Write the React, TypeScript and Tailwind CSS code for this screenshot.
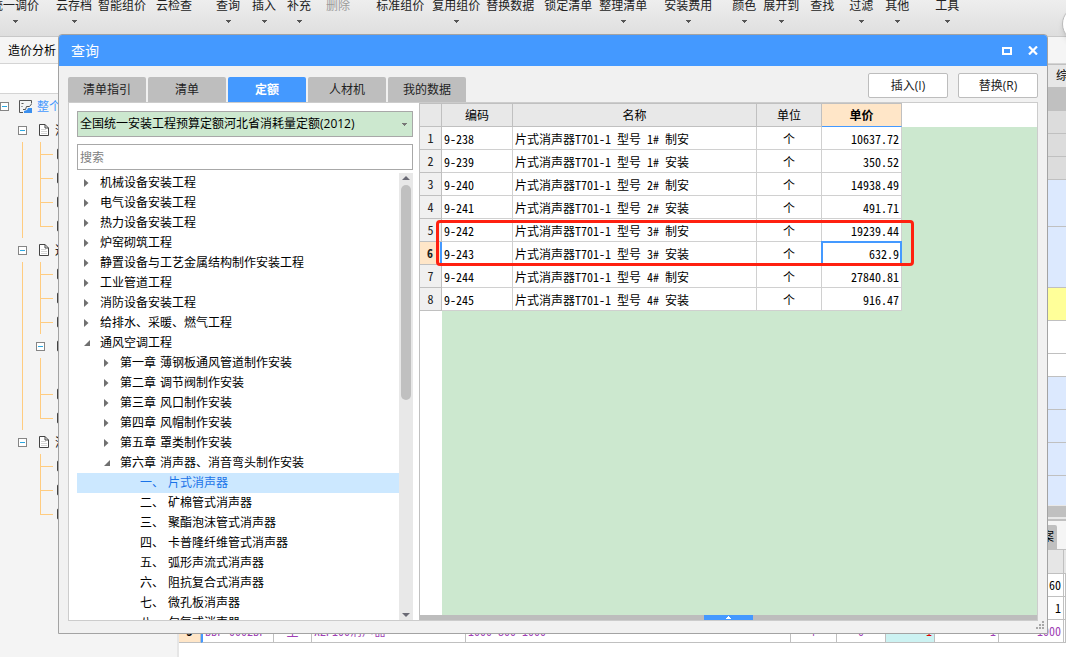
import clsx from "clsx";

const ribbonItems = [
  { label: "统一调价", space: "-ml-[9px]", menu: true },
  { label: "云存档", space: "ml-[17px]", menu: true },
  { label: "智能组价", space: "ml-1.5" },
  { label: "云检查", space: "ml-2.5" },
  { label: "查询", space: "ml-6", menu: true },
  { label: "插入", space: "ml-3", menu: true },
  { label: "补充", space: "ml-[11px]", menu: true },
  { label: "删除", space: "ml-[15px]", disabled: true },
  { label: "标准组价", space: "ml-[26px]" },
  { label: "复用组价", space: "ml-2", menu: true },
  { label: "替换数据", space: "ml-1.5" },
  { label: "锁定清单", space: "ml-2.5" },
  { label: "整理清单", space: "ml-[7px]", menu: true },
  { label: "安装费用", space: "ml-[17px]", menu: true },
  { label: "颜色", space: "ml-5", menu: true },
  { label: "展开到", space: "ml-[7px]", menu: true },
  { label: "查找", space: "ml-[11px]" },
  { label: "过滤", space: "ml-[15px]", menu: true },
  { label: "其他", space: "ml-3", menu: true },
  { label: "工具", space: "ml-[26px]", menu: true },
];

type ProjectRow = {
  kind: "doc" | "group" | "child" | "gap" | "last";
  line: boolean;
  label?: string;
};

const projectRows: ProjectRow[] = [
  { kind: "doc", line: false, label: "消防工程" },
  { kind: "child", line: true },
  { kind: "child", line: true },
  { kind: "child", line: true },
  { kind: "last", line: true },
  { kind: "doc", line: false, label: "通风工程" },
  { kind: "child", line: true },
  { kind: "child", line: true },
  { kind: "child", line: true },
  { kind: "group", line: true },
  { kind: "gap", line: true },
  { kind: "child", line: true },
  { kind: "last", line: true },
  { kind: "doc", line: false, label: "消防工程" },
  { kind: "child", line: false },
  { kind: "child", line: false },
  { kind: "last", line: false },
];

const tabs = ["清单指引", "清单", "定额", "人材机", "我的数据"];

const catalog = [
  { level: 0, text: ["机械设备安装工程"] },
  { level: 0, text: ["电气设备安装工程"] },
  { level: 0, text: ["热力设备安装工程"] },
  { level: 0, text: ["炉窑砌筑工程"] },
  { level: 0, text: ["静置设备与工艺金属结构制作安装工程"] },
  { level: 0, text: ["工业管道工程"] },
  { level: 0, text: ["消防设备安装工程"] },
  { level: 0, text: ["给排水、采暖、燃气工程"] },
  { level: 0, text: ["通风空调工程"], open: true },
  { level: 1, text: ["第一章", "薄钢板通风管道制作安装"] },
  { level: 1, text: ["第二章", "调节阀制作安装"] },
  { level: 1, text: ["第三章", "风口制作安装"] },
  { level: 1, text: ["第四章", "风帽制作安装"] },
  { level: 1, text: ["第五章", "罩类制作安装"] },
  { level: 1, text: ["第六章", "消声器、消音弯头制作安装"], open: true },
  { level: 2, text: ["一、", "片式消声器"], active: true },
  { level: 2, text: ["二、", "矿棉管式消声器"] },
  { level: 2, text: ["三、", "聚酯泡沫管式消声器"] },
  { level: 2, text: ["四、", "卡普隆纤维管式消声器"] },
  { level: 2, text: ["五、", "弧形声流式消声器"] },
  { level: 2, text: ["六、", "阻抗复合式消声器"] },
  { level: 2, text: ["七、", "微孔板消声器"] },
  { level: 2, text: ["八、", "匀复式消声器"] },
];

const quotas = [
  { code: "9-238", name: "片式消声器T701-1 型号 1# 制安", unit: "个", price: "10637.72" },
  { code: "9-239", name: "片式消声器T701-1 型号 1# 安装", unit: "个", price: "350.52" },
  { code: "9-240", name: "片式消声器T701-1 型号 2# 制安", unit: "个", price: "14938.49" },
  { code: "9-241", name: "片式消声器T701-1 型号 2# 安装", unit: "个", price: "491.71" },
  { code: "9-242", name: "片式消声器T701-1 型号 3# 制安", unit: "个", price: "19239.44" },
  { code: "9-243", name: "片式消声器T701-1 型号 3# 安装", unit: "个", price: "632.9" },
  { code: "9-244", name: "片式消声器T701-1 型号 4# 制安", unit: "个", price: "27840.81" },
  { code: "9-245", name: "片式消声器T701-1 型号 4# 安装", unit: "个", price: "916.47" },
];

const sheetRows = [
  "h-6 bg-[#c0c0c0]",
  "h-[23px] border-b border-[#c0c0c0] bg-[#dcdcdc]",
  "h-[23px] border-b border-[#c0c0c0] bg-[#dcdcdc]",
  "h-[23px] border-b border-[#c0c0c0] bg-[#dcdcdc]",
  "h-[47px] border-b border-[#c0c0c0] bg-[#dce9fe]",
  "h-[61px] border-b border-[#c0c0c0] bg-[#dce9fe]",
  "h-[33px] border-b border-[#c0c0c0] bg-[#ffff99]",
  "h-[33px] border-b border-[#c0c0c0] bg-white",
  "h-[23px] border-b border-[#c0c0c0] bg-white",
  "h-[33px] border-b border-[#c0c0c0] bg-[#dce9fe]",
  "h-[33px] border-b border-[#c0c0c0] bg-[#dce9fe]",
  "h-[33px] border-b border-[#c0c0c0] bg-[#dce9fe]",
  "h-[29px] bg-[#dce9fe]",
];

function Caret({ className }: { className?: string }) {
  return (
    <svg width="5" height="3" viewBox="0 0 5 3" className={className} aria-hidden="true">
      <path d="M0 0h5v1H4v1H3v1H2V2H1V1H0z" fill="currentColor" />
    </svg>
  );
}

function Ribbon() {
  return (
    <nav className="flex h-[37px] shrink-0 items-start overflow-hidden border-b border-[#c8c8c8] bg-linear-to-b from-[#eeeeee] to-[#dedede]">
      {ribbonItems.map((item) => (
        <button
          key={item.label}
          type="button"
          disabled={item.disabled}
          className={clsx(
            "-mt-1 flex shrink-0 flex-col items-center text-xs leading-5 whitespace-nowrap",
            item.space,
            item.disabled ? "text-[#9b9b9b]" : "text-[#222]",
          )}
        >
          {item.label}
          {item.menu && <Caret className="mt-1 text-[#555]" />}
        </button>
      ))}
    </nav>
  );
}

function Collapse() {
  return (
    <svg width="9" height="9" viewBox="0 0 9 9" className="shrink-0" aria-hidden="true">
      <rect x="0.5" y="0.5" width="8" height="8" fill="#fff" stroke="#858585" />
      <path d="M2 4.5h5" stroke="#2ba7e0" />
    </svg>
  );
}

function ProjectTree() {
  return (
    <aside className="flex w-[179px] shrink-0 flex-col overflow-hidden border-r-2 border-[#e6e6e6] bg-[#f4f4f4]">
      <div className="h-[30px] shrink-0 border-b border-[#d4d4d4] bg-white" />
      <ul className="text-xs whitespace-nowrap">
        <li className="flex h-6 items-center">
          <Collapse />
          <svg width="13" height="13" viewBox="0 0 13 13" className="ml-2.5" aria-hidden="true">
            <path d="M12.5 3.500V.5H.5v12H4" fill="none" stroke="#555" />
            <path d="M2.500 3.500h2M2.500 6.500h1" stroke="#555" />
            <path d="M4 9.500h2.500l1-3h3l2-2.500" stroke="#555" fill="none" />
            <path d="M5 13v-2l3-1 1-2h4v5z" fill="#3b8fee" />
          </svg>
          <span className="ml-[5px] pt-0.5 text-[#4499ff]">整个项目</span>
        </li>
        {projectRows.map((row, i) => (
          <li key={i} className="flex h-6 items-center">
            {row.kind === "doc" ? (
              <>
                <span className="w-[18px]" />
                <Collapse />
                <svg width="10" height="12" viewBox="0 0 10 12" className="ml-3 shrink-0" aria-hidden="true">
                  <path d="M.5.5h5.500L9.500 4v7.500h-9z" fill="#fff" stroke="#444" />
                  <path d="M6 .5V4h3.500" fill="none" stroke="#444" />
                  <path d="M2 5.500h5M2 7.500h6M2 9.500h6" stroke="#d4d4d4" />
                </svg>
                <span className="ml-1.5 pt-0.5">{row.label}</span>
              </>
            ) : (
              <>
                <span
                  className={clsx(
                    "ml-[22px] h-6 w-3.5 shrink-0",
                    row.line && "border-l border-[#ffcc80]",
                  )}
                />
                {row.kind === "group" ? (
                  <span className="w-[21px]">
                    <Collapse />
                  </span>
                ) : (
                  <span className="ml-1 flex h-6 w-[17px] flex-col">
                    <span
                      className={clsx(
                        "h-[13px] w-[13px] border-l border-[#ffcc80]",
                        row.kind !== "gap" && "border-b",
                      )}
                    />
                    {row.kind !== "last" && (
                      <span className="w-[13px] flex-1 border-l border-[#ffcc80]" />
                    )}
                  </span>
                )}
                {row.kind !== "gap" && (
                  <span className="h-3 w-2.5 rounded-xs border border-[#444] bg-white" />
                )}
              </>
            )}
          </li>
        ))}
      </ul>
    </aside>
  );
}

function Sheet() {
  return (
    <div className="flex min-w-0 flex-1 flex-col bg-white text-xs">
      <table className="w-full table-fixed border-separate border-spacing-0">
        <thead>
          <tr>
            <th className="h-[23px] border-t border-[#c0c0c0] bg-[#e6e6e6] p-0" />
            <th className="w-2.5 overflow-hidden border-t border-[#c0c0c0] bg-[#e6e6e6] p-0 text-left font-normal whitespace-nowrap">
              综合
            </th>
          </tr>
        </thead>
        <tbody>
          {sheetRows.map((row, i) => (
            <tr key={i}>
              <td colSpan={2} className={clsx("p-0", row)} />
            </tr>
          ))}
        </tbody>
      </table>
      <div className="h-3.5 shrink-0 border-y-2 border-t-1 border-[#e8e8e8] bg-[#c0c0c0]" />
      <div className="flex h-[31px] shrink-0 items-end justify-end border-t-2 border-b border-[#c0c0c0] bg-[#f5f5f5] pr-[9px]">
        <button type="button" className="h-6 rounded-t-xs bg-[#c0c0c0] px-[3px] text-xs">
          方案
        </button>
      </div>
      <table className="w-full table-fixed border-separate border-spacing-0 font-['Noto_Sans_CJK_SC',sans-serif] text-[#a03fb5] [font-feature-settings:'hwid'] [&_td]:h-[23px] [&_td]:overflow-hidden [&_td]:border-r [&_td]:border-b [&_td]:border-[#c0c0c0] [&_td]:px-0.5 [&_td]:py-0 [&_td]:leading-4 [&_td]:whitespace-nowrap">
        <colgroup>
          <col className="w-[22px]" />
          <col className="w-[73px]" />
          <col className="w-[38px]" />
          <col className="w-[154px]" />
          <col />
          <col className="w-[46px]" />
          <col className="w-[49px]" />
          <col className="w-[49px]" />
          <col className="w-16" />
          <col className="w-[65px]" />
          <col className="w-0.5" />
        </colgroup>
        <thead>
          <tr>
            <th colSpan={10} className="h-6 border-r border-b border-[#c0c0c0] bg-[#e6e6e6] p-0" />
            <th className="border-b border-[#c0c0c0] bg-[#e6e6e6] p-0" />
          </tr>
        </thead>
        <tbody>
          <tr className="text-black">
            <td colSpan={9} />
            <td className="text-right">60</td>
            <td />
          </tr>
          <tr className="text-black">
            <td colSpan={9} />
            <td className="text-right">1</td>
            <td />
          </tr>
          <tr>
            <td className="bg-[#ffe6c8] text-center font-bold text-black">3</td>
            <td className="border-l-2 border-l-[#4499ff]!">BBF-0002BF</td>
            <td className="text-center">主</td>
            <td>XZP100消声器</td>
            <td>1000*800*1000</td>
            <td className="text-center">个</td>
            <td className="text-center">0</td>
            <td className="bg-[#ccf2f2] text-right text-[#e00000]">1</td>
            <td className="text-right">1</td>
            <td className="text-right">1000</td>
            <td />
          </tr>
        </tbody>
      </table>
    </div>
  );
}

function Catalog() {
  return (
    <div className="flex w-[350px] shrink-0 flex-col pt-2 pr-1.5 pl-2">
      <div className="relative flex">
        <select
          aria-label="定额库"
          className="h-[26px] w-full appearance-none border border-[#a8a8a8] bg-[#cce8cf] px-0.5 text-xs text-black"
        >
          <option>全国统一安装工程预算定额河北省消耗量定额(2012)</option>
        </select>
        <Caret className="pointer-events-none absolute top-3 right-1.5 text-[#777]" />
      </div>
      <input
        type="text"
        aria-label="搜索"
        placeholder="搜索"
        className="mt-[7px] h-[26px] w-full border border-[#a8a8a8] bg-white px-0.5 text-xs placeholder:text-[#808080]"
      />
      <div className="mt-[3px] flex min-h-0 flex-1">
        <ul className="min-w-0 flex-1 overflow-hidden text-xs leading-5 text-black">
          {catalog.map((node) => (
            <li
              key={node.text.join("")}
              className={clsx(
                "flex h-5 items-center whitespace-nowrap",
                node.level === 0 && "pl-[7px]",
                node.level === 1 && "pl-[27px]",
                node.level === 2 && "pl-[63px]",
                node.active && "bg-[#cce8ff] text-[#1a73e8]",
              )}
            >
              {node.level < 2 && (
                <svg width="16" height="8" viewBox="0 0 16 8" className="shrink-0 text-[#707070]" aria-hidden="true">
                  <path d={node.open ? "M6 1v6H0z" : "M0 0l4.500 4L0 8z"} fill="currentColor" />
                </svg>
              )}
              <span className="flex gap-1">
                {node.text.map((part) => (
                  <span key={part}>{part}</span>
                ))}
              </span>
            </li>
          ))}
        </ul>
        <div className="flex w-3.5 flex-col items-center bg-[#e8e8e8] text-[#6a6a75]">
          <svg width="8" height="4" viewBox="0 0 8 4" className="mt-[3px]" aria-hidden="true">
            <path d="M0 4h8L4 0z" fill="currentColor" />
          </svg>
          <div className="mt-[5px] h-[215px] w-2.5 rounded-full bg-[#c0c0c0]" />
          <svg width="8" height="4" viewBox="0 0 8 4" className="mt-auto mb-[3px]" aria-hidden="true">
            <path d="M0 0h8L4 4z" fill="currentColor" />
          </svg>
        </div>
      </div>
    </div>
  );
}

function QuotaGrid() {
  return (
    <div className="flex min-w-0 flex-1 flex-col border-l border-[#c0c0c0]">
      <div className="relative flex">
        <table className="w-[482px] shrink-0 table-fixed border-separate border-spacing-0 bg-white font-['Noto_Sans_CJK_SC',sans-serif] text-xs leading-4 text-black [font-feature-settings:'hwid'] [&_td]:h-[23px] [&_td]:border-r [&_td]:border-b [&_td]:border-[#d0d0d0] [&_td]:px-0.5 [&_td]:pt-0.5 [&_td]:pb-0 [&_td]:whitespace-nowrap [&_th]:border-r [&_th]:border-b [&_th]:border-[#c0c0c0] [&_th]:p-0">
          <colgroup>
            <col className="w-[22px]" />
            <col className="w-[71px]" />
            <col className="w-[244px]" />
            <col className="w-[65px]" />
            <col className="w-20" />
          </colgroup>
          <thead>
            <tr className="[&_th]:h-6 [&_th]:border-t">
              <th className="bg-[#e8e8e8]" />
              <th className="bg-[#e8e8e8] font-normal">编码</th>
              <th className="bg-[#e8e8e8] font-normal">名称</th>
              <th className="bg-[#e8e8e8] font-normal">单位</th>
              <th className="border-b-[#4499ff]! bg-[#ffe6c8] font-bold">单价</th>
            </tr>
          </thead>
          <tbody>
            {quotas.map((quota, i) => {
              const current = quota.code === "9-243";
              return (
                <tr key={quota.code}>
                  <th
                    scope="row"
                    className={clsx(
                      "text-[#222]",
                      current ? "border-r-2! border-r-[#4499ff]! bg-[#ffe6c8] font-bold" : "bg-[#f0f0f0] font-normal",
                    )}
                  >
                    {i + 1}
                  </th>
                  <td>{quota.code}</td>
                  <td>{quota.name}</td>
                  <td className="text-center">{quota.unit}</td>
                  <td className="relative text-right">
                    {quota.price}
                    {current && <span className="absolute -inset-px border-2 border-[#4499ff]" />}
                  </td>
                </tr>
              );
            })}
          </tbody>
        </table>
        <div className="flex flex-1 flex-col">
          <div className="h-6 bg-white" />
          <div className="flex-1 bg-[#cce8cf]" />
        </div>
        {/* highlight around rows 5 and 6 */}
        <div className="pointer-events-none absolute top-[117px] left-4 h-[46px] w-[478px] rounded-sm border-3 border-[#ff2010]" />
      </div>
      <div className="flex flex-1">
        <div className="w-[22px] bg-white" />
        <div className="flex-1 bg-[#cce8cf]" />
      </div>
      <div className="flex h-[5px] justify-center bg-[#bdbdbd]">
        <button type="button" aria-label="展开" className="flex w-[49px] items-center justify-center bg-[#4499ff]">
          <Caret className="rotate-180 text-white" />
        </button>
      </div>
    </div>
  );
}

function QueryDialog() {
  return (
    <section
      role="dialog"
      aria-label="查询"
      className="absolute top-[34px] right-[18px] bottom-[23px] left-[58px] flex flex-col overflow-hidden rounded-t border border-[#a3a3a3] bg-[#f1f1f1]"
    >
      <header className="flex h-[31px] shrink-0 items-center bg-[#4499ff] pr-[9px] pl-3 text-white">
        <h1 className="flex-1 text-sm">查询</h1>
        <button type="button" aria-label="最大化">
          <svg width="10" height="8" viewBox="0 0 10 8" aria-hidden="true">
            <rect x="1" y="1" width="8" height="6" fill="none" stroke="currentColor" strokeWidth="2" />
          </svg>
        </button>
        <button type="button" aria-label="关闭" className="ml-4">
          <svg width="10" height="9" viewBox="0 0 10 9" aria-hidden="true">
            <path d="M1 .5l8 8M9 .5l-8 8" fill="none" stroke="currentColor" strokeWidth="2.200" />
          </svg>
        </button>
      </header>

      <div className="flex h-9 shrink-0 items-end px-[9px]">
        <div className="flex flex-1 gap-0.5">
          {tabs.map((tab) => (
            <button
              key={tab}
              type="button"
              className={clsx(
                "h-[25px] w-[78px] rounded-t-xs text-xs",
                tab === "定额" ? "bg-[#4499ff] font-bold text-white" : "bg-[#bebebe] text-[#222]",
              )}
            >
              {tab}
            </button>
          ))}
        </div>
        <div className="flex gap-2.5 self-start pt-[7px]">
          <button type="button" className="h-[25px] w-20 rounded-xs border border-[#bdbdbd] bg-white text-xs text-[#222]">
            插入(I)
          </button>
          <button type="button" className="h-[25px] w-20 rounded-xs border border-[#bdbdbd] bg-white text-xs text-[#222]">
            替换(R)
          </button>
        </div>
      </div>

      <div className="mx-[9px] flex min-h-0 flex-1 border border-[#cccccc] bg-white">
        <Catalog />
        <QuotaGrid />
      </div>

      <footer className="flex h-3 shrink-0 justify-end pr-[3px]">
        <svg width="8" height="8" viewBox="0 0 8 8" fill="#a8a8a8" aria-hidden="true">
          <path d="M6 0h2v2H6zM3 3h2v2H3zM6 3h2v2H6zM0 6h2v2H0zM3 6h2v2H3zM6 6h2v2H6z" />
        </svg>
      </footer>
    </section>
  );
}

export default function App() {
  return (
    <main className="relative flex h-screen flex-col overflow-hidden bg-white font-['Open_Sans','Noto_Sans_CJK_SC',sans-serif] text-black">
      <Ribbon />
      <div className="flex h-[27px] shrink-0 items-center border-b border-[#d4d4d4] bg-[#f5f5f5] pt-0.5 pl-2 text-xs">
        <a href="#">造价分析</a>
      </div>
      <div className="flex min-h-0 flex-1">
        <ProjectTree />
        <Sheet />
      </div>
      <div className="absolute top-1.5 -right-8 size-9 rounded-full border border-[#bbb] bg-white shadow-md" />
      <QueryDialog />
    </main>
  );
}
